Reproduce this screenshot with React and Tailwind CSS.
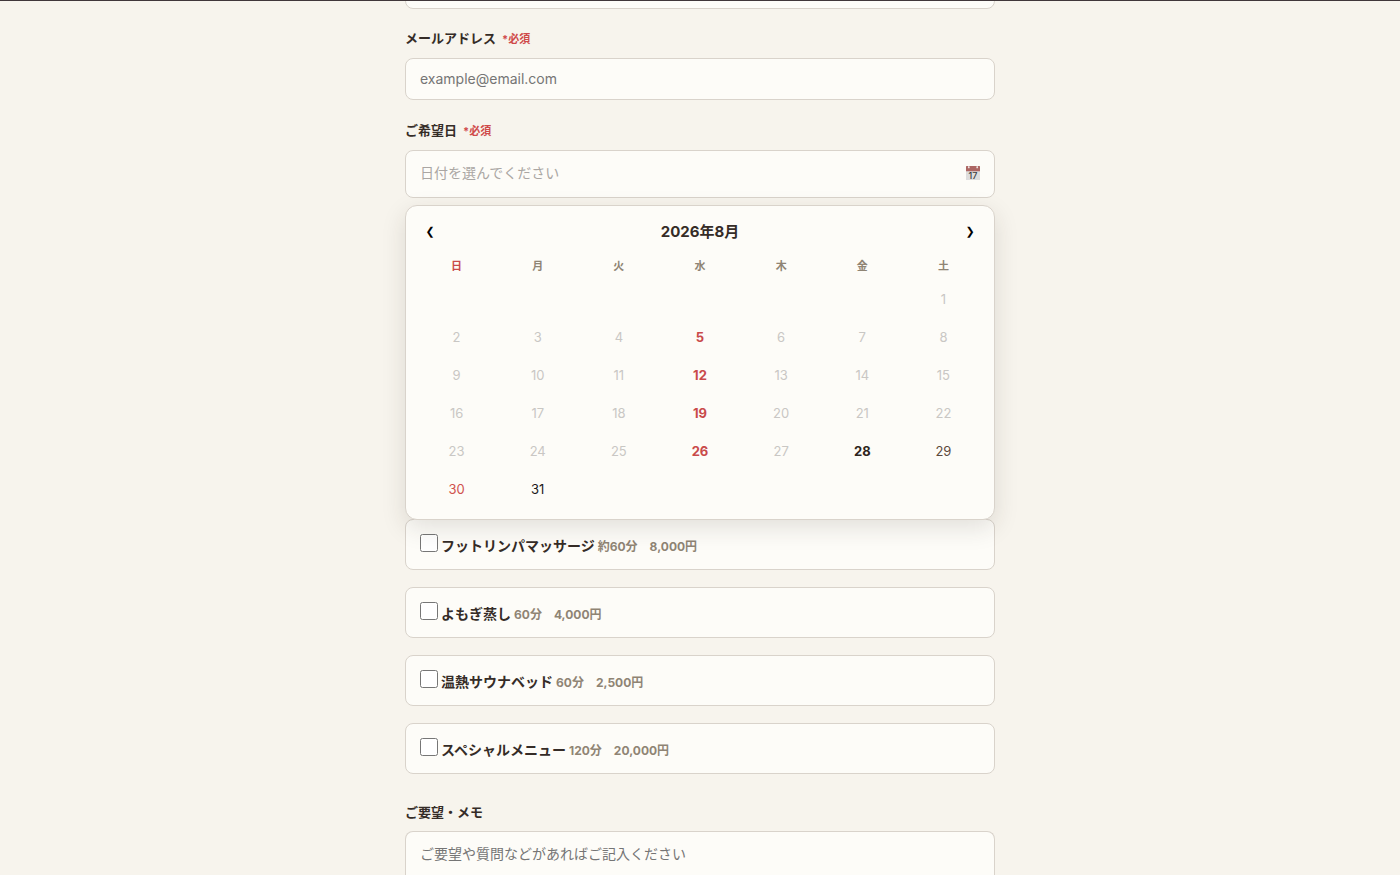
import React from "react";

const weekdays = ["日", "月", "火", "水", "木", "金", "土"];

const menus = [
  { id: "foot", name: "フットリンパマッサージ", detail: "約60分　8,000円" },
  { id: "yomogi", name: "よもぎ蒸し", detail: "60分　4,000円" },
  { id: "sauna", name: "温熱サウナベッド", detail: "60分　2,500円" },
  { id: "special", name: "スペシャルメニュー", detail: "120分　20,000円" }
];

const FIRST_WEEKDAY = 6;
const DAYS = 31;
const TODAY = 28;

function dayClass(day) {
  const weekday = (day + FIRST_WEEKDAY - 1) % 7;
  if (weekday === 3) return "font-bold text-[#c94a4a]";
  if (day < TODAY) return "text-[#c9c7c4]";
  if (day === TODAY) return "font-bold text-[#2e2520]";
  if (weekday === 0) return "text-[#d0504d]";
  if (weekday === 6) return "text-[#5c4a3d]";
  return "text-[#1a1a1a]";
}

function CalendarIcon() {
  return (
    <svg width="14" height="14" viewBox="0 0 14 14" aria-hidden="true">
      <rect x="0" y="0" width="14" height="14" rx="0.6" fill="#dedddd" />
      <path d="M0 0.6Q0 0 0.6 0H13.4Q14 0 14 0.6V5.2H0Z" fill="#ad6663" />
      <circle cx="2.8" cy="1.4" r="0.9" fill="#eee2e0" />
      <circle cx="11.2" cy="1.4" r="0.9" fill="#eee2e0" />
      <path d="M2.8 0V1.2M11.2 0V1.2" stroke="#f5f0ee" strokeWidth="0.8" />
      <text x="7" y="12.6" textAnchor="middle" fontSize="9" fontFamily="Inter, sans-serif" fontWeight="500" fill="#3c3c3c">17</text>
    </svg>
  );
}

function Required() {
  return <span className="ml-[6px] text-[11px] text-[#cf4a4a]">*必須</span>;
}

function Calendar() {
  return (
    <div className="relative z-10 mt-[7px] rounded-xl border border-[#d9d3cb] bg-[#fdfcf8] px-[11px] pt-3 pb-[11px] shadow-[0_8px_24px_rgba(44,36,32,0.13)]">
      <div className="flex h-7 items-center justify-between">
        <button type="button" aria-label="前の月" className="w-[26px] font-['DejaVu_Sans',sans-serif] text-[11px] text-black">❮</button>
        <div className="text-[15px] font-bold">2026年8月</div>
        <button type="button" aria-label="次の月" className="w-[26px] font-['DejaVu_Sans',sans-serif] text-[11px] text-black">❯</button>
      </div>
      <div className="mt-2 grid grid-cols-7 gap-0.5">
        {weekdays.map((w, i) => (
          <div key={w} className={`flex h-6 items-center justify-center text-[11px] font-bold ${i === 0 ? "text-[#c94a4a]" : "text-[#8f8474]"}`}>
            {w}
          </div>
        ))}
      </div>
      <div className="mt-1 grid grid-cols-7 gap-0.5">
        {Array.from({ length: FIRST_WEEKDAY }, (_, i) => (
          <span key={`blank-${i}`} />
        ))}
        {Array.from({ length: DAYS }, (_, i) => i + 1).map((day) => (
          <button key={day} type="button" className={`h-9 rounded-lg text-[13px] ${dayClass(day)}`}>
            {day}
          </button>
        ))}
      </div>
    </div>
  );
}

export default function App() {
  return (
    <div className="min-h-screen bg-[#f7f4ed] font-['Inter','Noto_Sans_CJK_JP',sans-serif] text-[#352c27]">
      <div className="h-px bg-[#40373a]" />
      <form className="mx-auto max-w-[590px]">
        <div className="flex h-2 items-end overflow-hidden">
          <input aria-label="電話番号" className="h-[42px] w-full shrink-0 rounded-lg border border-[#d9d3cb] bg-[#fdfcf8]" />
        </div>

        <label htmlFor="email" className="mt-[19px] block text-[13px] leading-5 font-bold">
          メールアドレス<Required />
        </label>
        <input
          id="email"
          type="email"
          placeholder="example@email.com"
          className="mt-[9px] block h-[42px] w-full rounded-lg border border-[#d9d3cb] bg-[#fdfcf8] px-[14px] pb-[2px] text-sm placeholder:text-[#757575]"
        />

        <label htmlFor="date" className="mt-5 block text-[13px] leading-5 font-bold">
          ご希望日<Required />
        </label>
        <button
          id="date"
          type="button"
          className="mt-[9px] flex h-12 w-full items-center justify-between rounded-lg border border-[#d9d3cb] bg-[#fdfcf8] px-[14px] pb-[2px] text-sm text-[#aaa6a3]"
        >
          日付を選んでください
          <CalendarIcon />
        </button>
        <Calendar />

        <div className="-mt-px flex flex-col gap-[17px]">
          {menus.map((m) => (
            <label key={m.id} htmlFor={m.id} className="flex h-[51px] items-center rounded-lg border border-[#d9d3cb] bg-[#fdfcf8] px-[14px] font-bold">
              <input id={m.id} type="checkbox" className="mb-1 size-[18px]" />
              <span className="ml-[3px] flex items-baseline gap-[3px] pt-[3px]">
                <span className="text-sm">{m.name}</span>
                <span className="text-xs text-[#8f8474]">{m.detail}</span>
              </span>
            </label>
          ))}
        </div>

        <label htmlFor="memo" className="mt-7 block text-[13px] leading-5 font-bold">
          ご要望・メモ
        </label>
        <textarea
          id="memo"
          placeholder="ご要望や質問などがあればご記入ください"
          className="mt-[9px] block h-11 w-full resize-none overflow-hidden rounded-t-lg border border-b-0 border-[#d9d3cb] bg-[#fdfcf8] px-[14px] py-3 text-sm placeholder:text-[#757575]"
        />
      </form>
    </div>
  );
}
